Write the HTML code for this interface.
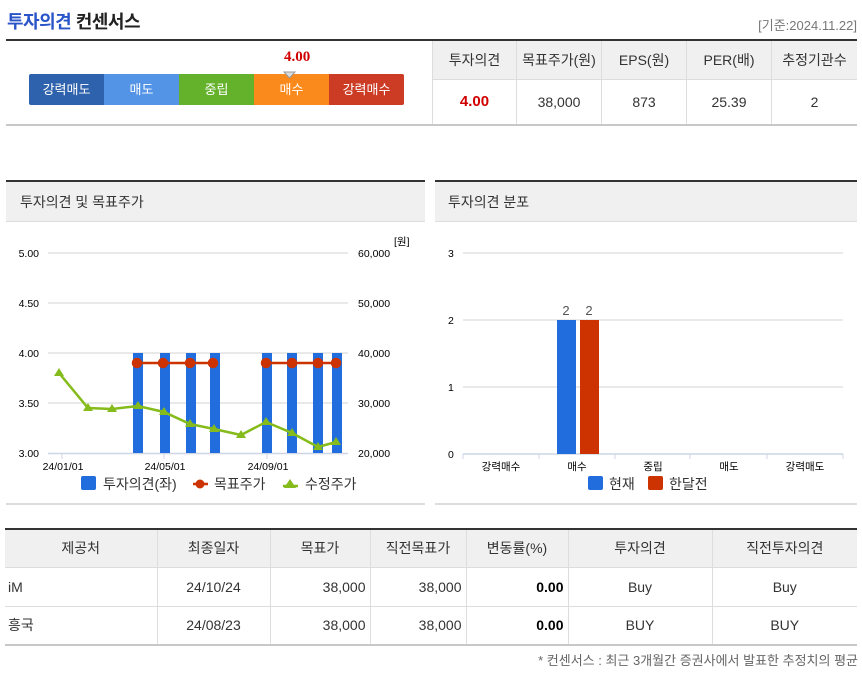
<!DOCTYPE html>
<html><head><meta charset="utf-8"><style>
*{margin:0;padding:0;box-sizing:border-box}
body{width:862px;height:673px;background:#fff;font-family:"Liberation Sans","Noto Sans CJK KR",sans-serif;position:relative;overflow:hidden;color:#333}
.abs{position:absolute}
table{border-collapse:collapse;position:absolute}
td,th{font-weight:normal;text-align:center;font-size:14px;color:#333}
</style></head><body>
<div class="abs" style="left:7px;top:8px;font-size:18px;font-weight:bold;letter-spacing:-0.5px"><span style="color:#2a55c9">투자의견</span> <span style="color:#222">컨센서스</span></div>
<div class="abs" style="right:5px;top:15px;font-size:13px;color:#777">[기준:2024.11.22]</div>
<div class="abs" style="left:6px;top:39px;width:851px;height:2px;background:#333"></div>
<div class="abs" style="left:6px;top:124px;width:851px;height:2px;background:#c8c8c8"></div>
<!-- gauge -->
<div class="abs" style="left:284px;top:49px;font-family:'Liberation Serif',serif;font-weight:bold;font-size:15px;color:#d00000">4.00</div>
<div class="abs" style="left:29px;top:74px;width:375px;height:31px;display:flex;font-size:13px;color:#fff;border-radius:2px;overflow:hidden">
<div style="width:75px;background:#2e62ac;text-align:center;line-height:31px">강력매도</div>
<div style="width:75px;background:#5494e6;text-align:center;line-height:31px">매도</div>
<div style="width:75px;background:#64b22c;text-align:center;line-height:31px">중립</div>
<div style="width:75px;background:#fb8a1c;text-align:center;line-height:31px">매수</div>
<div style="width:75px;background:#cc3b24;text-align:center;line-height:31px">강력매수</div>
</div>
<svg class="abs" style="left:283px;top:71px" width="13" height="8"><path d="M1 1 L12 1 L6.5 7Z" fill="#ddd" stroke="#999"/></svg>
<table style="left:432px;top:41px;width:425px">
<tr style="height:38px;background:#f0f0f0"><td style="border-right:1px solid #ddd;border-left:1px solid #ddd;width:84px">투자의견</td><td style="border-right:1px solid #ddd;width:85px">목표주가(원)</td><td style="border-right:1px solid #ddd;width:85px">EPS(원)</td><td style="border-right:1px solid #ddd;width:85px">PER(배)</td><td>추정기관수</td></tr>
<tr style="height:45px;border-top:1px solid #ddd"><td style="border-right:1px solid #ddd;border-left:1px solid #ddd;color:#d00000;font-weight:bold;font-size:15px">4.00</td><td style="border-right:1px solid #ddd">38,000</td><td style="border-right:1px solid #ddd">873</td><td style="border-right:1px solid #ddd">25.39</td><td>2</td></tr>
</table>
<!-- left chart panel -->
<div class="abs" style="left:6px;top:180px;width:419px;height:2px;background:#333"></div>
<div class="abs" style="left:6px;top:182px;width:419px;height:40px;background:#f0f0f0;border-bottom:1px solid #ddd;font-size:14px;line-height:40px;padding-left:14px">투자의견 및 목표주가</div>
<div class="abs" style="left:6px;top:503px;width:419px;height:2px;background:#ddd"></div>
<div class="abs" style="left:435px;top:180px;width:422px;height:2px;background:#333"></div>
<div class="abs" style="left:435px;top:182px;width:422px;height:40px;background:#f0f0f0;border-bottom:1px solid #ddd;font-size:14px;line-height:40px;padding-left:13px">투자의견 분포</div>
<div class="abs" style="left:435px;top:503px;width:422px;height:2px;background:#ddd"></div>
<svg class="abs" style="left:0;top:0" width="862" height="510" font-family="Liberation Sans, Noto Sans CJK KR, sans-serif">
<g stroke="#e2e2e2" stroke-width="1.5"><line x1="48" y1="253" x2="348" y2="253"/><line x1="48" y1="303" x2="348" y2="303"/><line x1="48" y1="353" x2="348" y2="353"/><line x1="48" y1="403" x2="348" y2="403"/></g>
<line x1="48" y1="453.5" x2="348" y2="453.5" stroke="#ccd6e6" stroke-width="1.5"/>
<g fill="#000" font-size="10.5" text-anchor="end"><text x="39" y="257">5.00</text><text x="39" y="307">4.50</text><text x="39" y="357">4.00</text><text x="39" y="407">3.50</text><text x="39" y="457">3.00</text></g>
<g fill="#000" font-size="10.5"><text x="358" y="257">60,000</text><text x="358" y="307">50,000</text><text x="358" y="357">40,000</text><text x="358" y="407">30,000</text><text x="358" y="457">20,000</text><text x="394" y="245">[원]</text></g>
<g fill="#226ddd"><rect x="133" y="353" width="10" height="100"/><rect x="160" y="353" width="10" height="100"/><rect x="186" y="353" width="10" height="100"/><rect x="210" y="353" width="10" height="100"/><rect x="262" y="353" width="10" height="100"/><rect x="287" y="353" width="10" height="100"/><rect x="313" y="353" width="10" height="100"/><rect x="332" y="353" width="10" height="100"/></g>
<g stroke="#cc3300" stroke-width="2.5" fill="#cc3300"><polyline points="137,363 163,363 190,363 213,363" fill="none"/><polyline points="266,363 292,363 318,363 336,363" fill="none"/>
<circle cx="137" cy="363" r="4"/><circle cx="163" cy="363" r="4"/><circle cx="190" cy="363" r="4"/><circle cx="213" cy="363" r="4"/><circle cx="266" cy="363" r="4"/><circle cx="292" cy="363" r="4"/><circle cx="318" cy="363" r="4"/><circle cx="336" cy="363" r="4"/></g>
<polyline points="59,373 88,408 112,409 138,406 164,412 190,424 214,429 241,435 266,422 292,433 318,447 336,442" fill="none" stroke="#85bb1a" stroke-width="2.5"/>
<g fill="#85bb1a">
<path d="M59 368l5 8h-10z"/><path d="M88 403l5 8h-10z"/><path d="M112 404l5 8h-10z"/><path d="M138 401l5 8h-10z"/><path d="M164 407l5 8h-10z"/><path d="M190 419l5 8h-10z"/><path d="M214 424l5 8h-10z"/><path d="M241 430l5 8h-10z"/><path d="M266 417l5 8h-10z"/><path d="M292 428l5 8h-10z"/><path d="M318 442l5 8h-10z"/><path d="M336 437l5 8h-10z"/></g>
<g stroke="#ccd6e6"><line x1="62" y1="454" x2="62" y2="459"/><line x1="164" y1="454" x2="164" y2="459"/><line x1="267" y1="454" x2="267" y2="459"/></g>
<g fill="#000" font-size="10.5" text-anchor="middle"><text x="63" y="470">24/01/01</text><text x="165" y="470">24/05/01</text><text x="268" y="470">24/09/01</text></g>
<rect x="81" y="476" width="15" height="14" rx="2" fill="#226ddd"/>
<text x="103" y="489" font-size="14" fill="#333">투자의견(좌)</text>
<line x1="193" y1="484" x2="208" y2="484" stroke="#cc3300" stroke-width="2.5"/><circle cx="200" cy="484" r="4.5" fill="#cc3300"/>
<text x="214" y="489" font-size="14" fill="#333">목표주가</text>
<line x1="283" y1="486" x2="298" y2="486" stroke="#85bb1a" stroke-width="2.5"/><path d="M290 479l6 9h-12z" fill="#85bb1a"/>
<text x="305" y="489" font-size="14" fill="#333">수정주가</text>
<!-- right chart -->
<g stroke="#e2e2e2" stroke-width="1.5"><line x1="463" y1="253" x2="843" y2="253"/><line x1="463" y1="320" x2="843" y2="320"/><line x1="463" y1="387" x2="843" y2="387"/></g>
<line x1="463" y1="454" x2="843" y2="454" stroke="#ccd6e6" stroke-width="1.5"/>
<g stroke="#ccd6e6"><line x1="463" y1="454" x2="463" y2="459"/><line x1="539" y1="454" x2="539" y2="459"/><line x1="615" y1="454" x2="615" y2="459"/><line x1="690" y1="454" x2="690" y2="459"/><line x1="767" y1="454" x2="767" y2="459"/><line x1="843" y1="454" x2="843" y2="459"/></g>
<g fill="#000" font-size="10.5"><text x="448" y="257">3</text><text x="448" y="324">2</text><text x="448" y="391">1</text><text x="448" y="458">0</text></g>
<rect x="557" y="320" width="19" height="134" fill="#226ddd"/><rect x="580" y="320" width="19" height="134" fill="#cc3300"/>
<g fill="#555" font-size="13" text-anchor="middle"><text x="566" y="315">2</text><text x="589" y="315">2</text></g>
<g fill="#000" font-size="10.5" text-anchor="middle"><text x="501" y="470">강력매수</text><text x="577" y="470">매수</text><text x="653" y="470">중립</text><text x="729" y="470">매도</text><text x="805" y="470">강력매도</text></g>
<rect x="588" y="476" width="15" height="14" rx="2" fill="#226ddd"/><text x="609" y="489" font-size="14" fill="#333">현재</text>
<rect x="648" y="476" width="15" height="14" rx="2" fill="#cc3300"/><text x="669" y="489" font-size="14" fill="#333">한달전</text>
</svg>
<!-- bottom table -->
<div class="abs" style="left:5px;top:528px;width:852px;height:2px;background:#333"></div>
<table style="left:5px;top:530px;width:852px;font-size:14px">
<tr style="height:37px;background:#f0f0f0"><td style="width:152px;border-right:1px solid #ddd">제공처</td><td style="width:113px;border-right:1px solid #ddd">최종일자</td><td style="width:100px;border-right:1px solid #ddd">목표가</td><td style="width:96px;border-right:1px solid #ddd">직전목표가</td><td style="width:102px;border-right:1px solid #ddd">변동률(%)</td><td style="width:144px;border-right:1px solid #ddd">투자의견</td><td>직전투자의견</td></tr>
<tr style="height:39px;border-top:1px solid #ddd"><td style="text-align:left;padding-left:3px;border-right:1px solid #ddd">iM</td><td style="border-right:1px solid #ddd">24/10/24</td><td style="text-align:right;padding-right:4px;border-right:1px solid #ddd">38,000</td><td style="text-align:right;padding-right:4px;border-right:1px solid #ddd">38,000</td><td style="text-align:right;padding-right:4px;border-right:1px solid #ddd;color:#000;font-weight:bold">0.00</td><td style="border-right:1px solid #ddd">Buy</td><td>Buy</td></tr>
<tr style="height:39px;border-top:1px solid #ddd;border-bottom:2px solid #c8c8c8"><td style="text-align:left;padding-left:3px;border-right:1px solid #ddd">흥국</td><td style="border-right:1px solid #ddd">24/08/23</td><td style="text-align:right;padding-right:4px;border-right:1px solid #ddd">38,000</td><td style="text-align:right;padding-right:4px;border-right:1px solid #ddd">38,000</td><td style="text-align:right;padding-right:4px;border-right:1px solid #ddd;color:#000;font-weight:bold">0.00</td><td style="border-right:1px solid #ddd">BUY</td><td>BUY</td></tr>
</table>
<div class="abs" style="right:4px;top:650px;font-size:13px;color:#666;white-space:nowrap">* 컨센서스 : 최근 3개월간 증권사에서 발표한 추정치의 평균</div>
</body></html>
